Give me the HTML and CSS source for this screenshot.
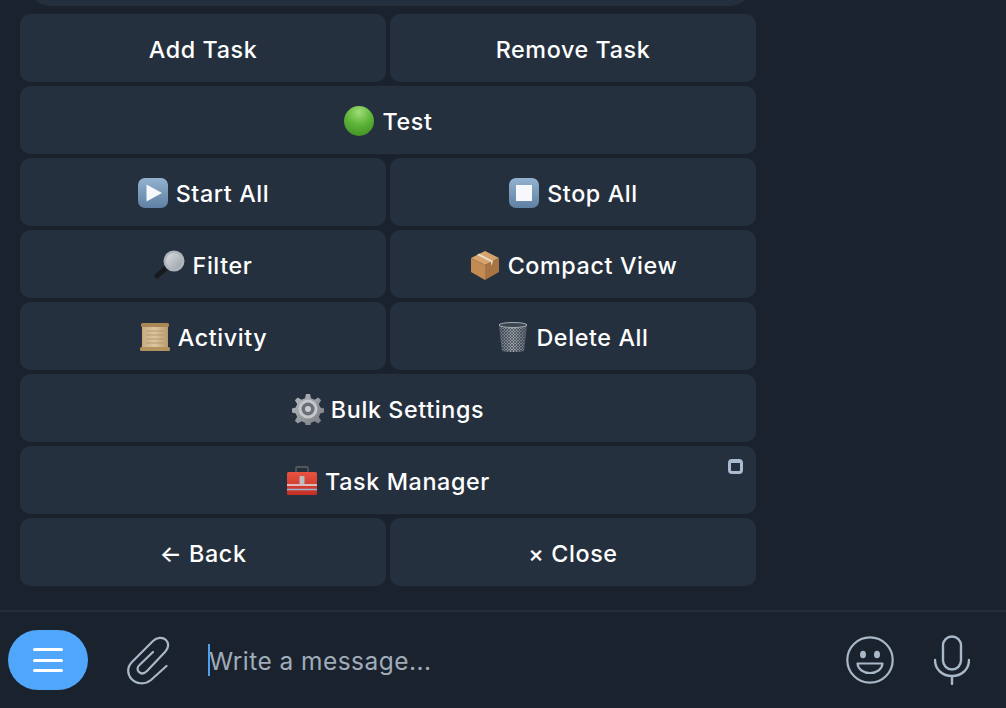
FILE: index.html
```html
<!DOCTYPE html>
<html lang="en">
<head>
<meta charset="utf-8">
<title>Task bot keyboard</title>
<link rel="stylesheet" href="styles.css">
</head>
<body>
<svg class="defs" width="0" height="0" aria-hidden="true">
  <defs>
    <radialGradient id="g-green" cx="50%" cy="20%" r="85%"><stop offset="0" stop-color="#a0dc78"/><stop offset="0.5" stop-color="#5fb53a"/><stop offset="1" stop-color="#3f8f22"/></radialGradient>
    <linearGradient id="g-key" x1="0" y1="0" x2="0" y2="1"><stop offset="0" stop-color="#93b2d0"/><stop offset="1" stop-color="#5f80a2"/></linearGradient>
    <linearGradient id="g-glass" x1="0" y1="0" x2="1" y2="1"><stop offset="0" stop-color="#d9dde2"/><stop offset="1" stop-color="#9ba1a8"/></linearGradient>
    <linearGradient id="g-scroll" x1="0" y1="0" x2="1" y2="0"><stop offset="0" stop-color="#c9ab7f"/><stop offset="0.5" stop-color="#dcc5a0"/><stop offset="1" stop-color="#b99a6c"/></linearGradient>
    <linearGradient id="g-bin" x1="0" y1="0" x2="1" y2="0"><stop offset="0" stop-color="#5f6872"/><stop offset="0.5" stop-color="#a1a9b2"/><stop offset="1" stop-color="#59626c"/></linearGradient>
    <linearGradient id="g-red" x1="0" y1="0" x2="0" y2="1"><stop offset="0" stop-color="#e8533f"/><stop offset="1" stop-color="#c22f25"/></linearGradient>
    <linearGradient id="g-gear" x1="0" y1="0" x2="1" y2="1"><stop offset="0" stop-color="#b9bcc1"/><stop offset="1" stop-color="#74787e"/></linearGradient>
    <pattern id="p-mesh" width="3" height="3" patternUnits="userSpaceOnUse"><path d="M0 0L3 3M3 0L0 3" stroke="#39424c" stroke-width=".7"/></pattern>
  </defs>
</svg>
<main class="page">
  <section class="chat">
    <div class="bubble-tail"></div>
    <div class="keyboard">
      <button class="key">Add Task</button>
      <button class="key">Remove Task</button>
      <button class="key wide">
        <svg class="emoji" viewBox="0 0 32 32"><circle cx="16" cy="16" r="15" fill="url(#g-green)"/></svg>
        Test
      </button>
      <button class="key">
        <svg class="emoji" viewBox="0 0 32 32"><rect x="1" y="1" width="30" height="30" rx="7" fill="url(#g-key)"/><path d="M9.500 7.500L25 16 9.500 24.500Z" fill="#f6f8fb"/></svg>
        Start All
      </button>
      <button class="key">
        <svg class="emoji" viewBox="0 0 32 32"><rect x="1" y="1" width="30" height="30" rx="7" fill="url(#g-key)"/><rect x="8" y="8" width="16" height="16" fill="#f6f8fb"/></svg>
        Stop All
      </button>
      <button class="key">
        <svg class="emoji" viewBox="0 0 32 32"><path d="M3 27L13 18" stroke="#17191c" stroke-width="5" stroke-linecap="round"/><circle cx="20" cy="12" r="10.500" fill="#aeb4bb"/><circle cx="20" cy="12" r="8" fill="url(#g-glass)"/></svg>
        Filter
      </button>
      <button class="key">
        <svg class="emoji" viewBox="0 0 32 32"><path d="M2 9L16 2 30 9 16 16Z" fill="#d6a36c"/><path d="M16 31V16L30 9V23Z" fill="#a87444"/><path d="M2 9V23L16 31V16Z" fill="#c28b52"/><path d="M8 6L22 13 22.500 17 24 12 10 4.500Z" fill="#e9dcc7"/></svg>
        Compact View
      </button>
      <button class="key">
        <svg class="emoji" viewBox="0 0 32 32"><rect x="3" y="5" width="26" height="22" fill="url(#g-scroll)"/><rect x="2" y="2" width="28" height="4" rx="1.500" fill="#a98856"/><rect x="1" y="26" width="30" height="4" rx="1.500" fill="#b3925f"/><path d="M7 10H25M7 14H25M7 18H25M7 22H25" stroke="#b39a72" stroke-width="1"/></svg>
        Activity
      </button>
      <button class="key">
        <svg class="emoji" viewBox="0 0 32 32"><path d="M2 4H30L27 30Q16 32 5 30Z" fill="url(#g-bin)"/><path d="M2 4H30L27 30Q16 32 5 30Z" fill="url(#p-mesh)"/><ellipse cx="16" cy="4" rx="14" ry="2.500" fill="#3c444e" stroke="#a3abb4" stroke-width="1"/></svg>
        Delete All
      </button>
      <button class="key wide">
        <svg class="emoji" viewBox="0 0 32 32"><path d="M16 16m-2 -15h4l1 4.200 3.500 1.500 3.700-2.300 2.900 2.900-2.300 3.700 1.500 3.500 4.200 1v4l-4.200 1-1.500 3.500 2.300 3.700-2.900 2.900-3.700-2.300-3.500 1.500-1 4.200h-4l-1-4.200-3.500-1.500-3.700 2.300-2.900-2.900 2.300-3.700-1.500-3.500-4.200-1v-4l4.200-1 1.500-3.500-2.300-3.700 2.900-2.900 3.700 2.300 3.500-1.500z" fill="url(#g-gear)"/><circle cx="16" cy="16" r="9.500" fill="#c4c7cb"/><circle cx="16" cy="16" r="6.500" fill="#6c7076"/><circle cx="16" cy="16" r="3" fill="#c9ccd0"/></svg>
        Bulk Settings
      </button>
      <button class="key wide">
        <svg class="emoji" viewBox="0 0 32 32"><path d="M10 7V3.500Q10 2 11.500 2H20.500Q22 2 22 3.500V7" fill="none" stroke="#55565a" stroke-width="1.800"/><rect x="1" y="7" width="30" height="23" rx="1.500" fill="url(#g-red)"/><path d="M1 20H31" stroke="#dfe6ef" stroke-width="1.500"/><path d="M1 24.500H31" stroke="#9db6d6" stroke-width="1.500"/><rect x="13.500" y="11" width="5" height="8" rx="1" fill="#b9bec4"/></svg>
        Task Manager
        <span class="corner"></span>
      </button>
      <button class="key">← Back</button>
      <button class="key">× Close</button>
    </div>
  </section>
  <footer class="composer">
    <button class="menu-btn" aria-label="Menu">
      <span class="bar"></span><span class="bar"></span><span class="bar"></span>
    </button>
    <svg class="clip" viewBox="0 0 44 50" fill="none"><path d="M39.500 31L24 45C18 50 9 49 4.500 44 0 39 0 32 5 27L26 6C30 2 36 2 39 5 42 8 42 13 38 17L20 36C17 39 14 39 12 37 10 35 10 32 12.500 30L26 17" stroke="#a9b8c8" stroke-width="2.200" stroke-linecap="round"/></svg>
    <div class="input"><span class="caret"></span><span class="placeholder">Write a message...</span></div>
    <svg class="smile" viewBox="0 0 48 48" fill="none"><circle cx="24" cy="24" r="22.700" stroke="#a9b8c8" stroke-width="2.200"/><ellipse cx="17" cy="18.500" rx="3" ry="3.800" fill="#a9b8c8"/><ellipse cx="31" cy="18.500" rx="3" ry="3.800" fill="#a9b8c8"/><path d="M11.500 27.500H36.500C36 33.500 30.500 37 24 37S12 33.500 11.500 27.500Z" stroke="#a9b8c8" stroke-width="2.200" stroke-linejoin="round"/></svg>
    <svg class="mic" viewBox="0 0 36 50" fill="none"><rect x="9" y="1.500" width="18" height="33" rx="9" stroke="#a9b8c8" stroke-width="2.400"/><path d="M1 25C1 35 9 41 18 41S35 35 35 25M18 41V49" stroke="#a9b8c8" stroke-width="2.400" stroke-linecap="round"/></svg>
  </footer>
</main>
</body>
</html>
```
FILE: styles.css
```css
* { box-sizing: border-box; }
html, body { margin: 0; height: 100%; }
body { background: #1a222d; font-family: Inter, "Liberation Sans", sans-serif; overflow: hidden; }
.defs { position: absolute; }
.page { display: flex; flex-direction: column; height: 708px; overflow: hidden; }
.chat { flex: 1; min-height: 0; padding-right: 250px; }
.bubble-tail { height: 50px; margin: -44px 4px 8px 28px; background: #242f3d; border-radius: 22px; }
.keyboard { display: grid; grid-template-columns: 366px 366px; grid-auto-rows: 68px; gap: 4px; padding-left: 20px; }
.key {
  position: relative; display: flex; align-items: center; justify-content: center; gap: 7px;
  border: 0; padding: 3px 0 0; border-radius: 10px; background: #25303e; color: #fff;
  font: 500 23.3px/28px Inter, "Liberation Sans", sans-serif; letter-spacing: .62px;
}
.wide { grid-column: 1 / -1; }
.emoji { width: 32px; height: 32px; flex: none; margin-top: -2px; }
.corner { position: absolute; top: 13px; right: 13px; width: 15px; height: 15px; border: 3px solid #a9bbd0; border-top-width: 4px; border-radius: 4px; }
.composer { flex: none; display: flex; align-items: center; height: 98px; padding: 0 36px 0 8px; background: #19222d; border-top: 2px solid #232e3c; }
.menu-btn { flex: none; display: flex; flex-direction: column; align-items: center; justify-content: center; gap: 7.5px; width: 80px; height: 60px; padding: 0; border: 0; border-radius: 30px; background: #50a6fb; }
.bar { display: block; width: 30px; height: 3px; border-radius: 2px; background: #fff; }
.clip { flex: none; width: 44px; height: 50px; margin-left: 39px; }
.input { flex: 1; display: flex; align-items: center; margin-left: 37px; }
.caret { width: 2px; height: 32px; margin-right: -1px; background: #4f9fee; }
.placeholder { font-size: 24.5px; letter-spacing: .45px; color: #a0acba; line-height: 32px; padding-top: 2px; }
.smile { flex: none; width: 48px; height: 48px; }
.mic { flex: none; width: 36px; height: 50px; margin-left: 40px; }
```
